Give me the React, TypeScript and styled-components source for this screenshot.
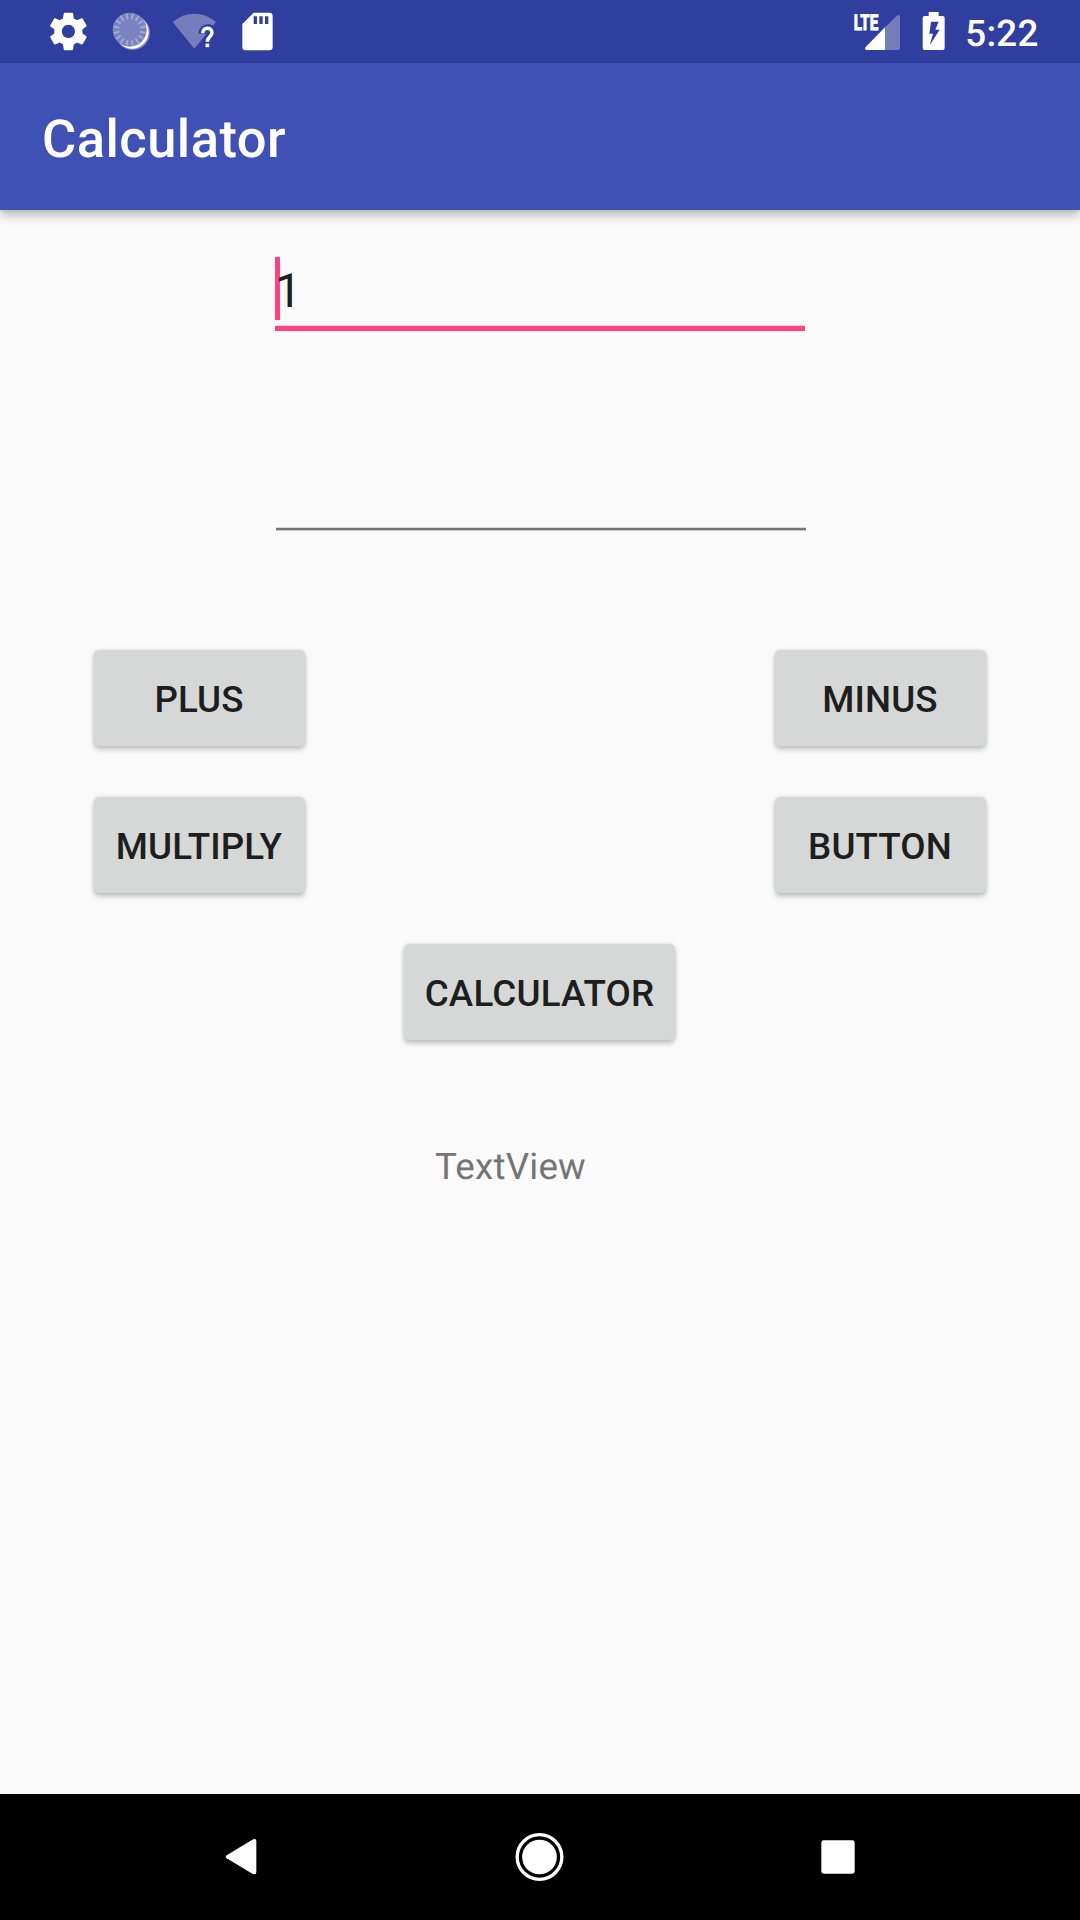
import React from "react";
import styled, { createGlobalStyle } from "styled-components";

const GlobalStyle = createGlobalStyle`
  *, *::before, *::after { box-sizing: border-box; }
  html, body { margin: 0; padding: 0; }
  body {
    width: 1080px;
    height: 1920px;
    overflow: hidden;
    background: #fafafa;
    font-family: Roboto, "Noto Sans", sans-serif;
    text-rendering: geometricPrecision;
  }
`;

const Screen = styled.div`
  display: flex;
  flex-direction: column;
  width: 1080px;
  height: 1920px;
  background: #fafafa;
`;

const StatusBar = styled.header`
  display: flex;
  justify-content: space-between;
  flex: none;
  height: 63px;
  padding: 0 41.5px 0 45px;
  background: #303f9f;
  color: #fff;
`;

const StatusGroup = styled.div`
  display: flex;
  align-items: flex-start;
`;

const StatusIcon = styled.svg<{ $after: number }>`
  display: block;
  flex: none;
  margin-right: ${(p) => p.$after}px;
`;

const Clock = styled.time`
  font-size: 36.75px;
  font-weight: 500;
  letter-spacing: 0.2px;
  line-height: 43px;
  padding-top: 12px;
`;

const Toolbar = styled.div`
  display: flex;
  align-items: center;
  flex: none;
  height: 147px;
  padding: 4px 42px 0;
  background: #3f51b5;
  box-shadow: 0 5px 10px rgba(0, 0, 0, 0.27), 0 1px 3px rgba(0, 0, 0, 0.06);
  z-index: 1;
`;

const Title = styled.h1`
  margin: 0;
  color: #fff;
  font-size: 52.5px;
  font-weight: 500;
  letter-spacing: 0.45px;
  line-height: 62px;
`;

const Content = styled.main`
  display: flex;
  flex-direction: column;
  flex: 1;
`;

const FirstField = styled.div`
  width: 530px;
  height: 75px;
  margin: 46px 0 0 275px;
  padding-top: 1px;
  border-bottom: 5px solid #ff4081;
  box-shadow: inset 0 -1px 0 rgba(255, 64, 129, 0.2);
`;

const FieldValue = styled.div`
  display: flex;
  height: 63px;
  border-left: 5px solid #ff4081;
  color: #1e1e1e;
  font-size: 47.25px;
  line-height: 63px;
  padding-top: 3px;
`;

const FieldDigit = styled.span`
  margin-left: -5px;
`;

const SecondField = styled.div`
  width: 530px;
  height: 199px;
  margin-left: 276px;
  border-bottom: 2px solid #757575;
  box-shadow: inset 0 -1px 0 rgba(0, 0, 0, 0.12), 0 1px 0 rgba(0, 0, 0, 0.2);
`;

const Pad = styled.section`
  display: grid;
  grid-template-columns: 211px 211px;
  justify-content: space-between;
  row-gap: 51px;
  margin: 120px 94px 0;
`;

const Button = styled.button<{ $width?: number }>`
  display: flex;
  align-items: center;
  justify-content: center;
  width: ${(p) => p.$width ?? 211}px;
  height: 96px;
  padding: 3px ${(p) => (p.$width ? 0 : 1)}px 0 0;
  border: 0;
  border-radius: 5px;
  background: #d6d7d7;
  color: #1e1e1e;
  font: 500 36.75px/44px Roboto, "Noto Sans", sans-serif;
  letter-spacing: ${(p) => (p.$width ? 0.2 : 0.1)}px;
  box-shadow: 0 4px 5px rgba(0, 0, 0, 0.19), 0 0 4px rgba(0, 0, 0, 0.13);
`;

const CalculateRow = styled.div`
  margin: 51px 0 0 404px;
`;

const Result = styled.p`
  margin: 105px 0 0 435px;
  color: #757575;
  font-size: 36.75px;
  letter-spacing: 0.2px;
  line-height: 43px;
`;

const NavBar = styled.nav`
  display: flex;
  align-items: center;
  justify-content: space-between;
  flex: none;
  height: 126px;
  padding: 0 224px;
  background: #000;
`;

const TICKS = Array.from({ length: 16 }, (_, i) => 11.25 + i * 22.5);

const SettingsIcon = () => (
  <StatusIcon $after={19} width="46" height="63" viewBox="0 0 46 63">
    <g transform="translate(.9 8.9) scale(1.875)">
      <path
        fill="#fff"
        d="M19.43 12.98c.04-.32.07-.64.07-.98s-.03-.66-.07-.98l2.11-1.65c.19-.15.24-.42.12-.64l-2-3.46c-.12-.22-.39-.3-.61-.22l-2.49 1c-.52-.4-1.08-.73-1.69-.98l-.38-2.65C14.46 2.18 14.25 2 14 2h-4c-.25 0-.46.18-.49.42l-.38 2.65c-.61.25-1.17.59-1.69.98l-2.49-1c-.23-.09-.49 0-.61.22l-2 3.46c-.13.22-.07.49.12.64l2.11 1.65c-.04.32-.07.65-.07.98s.03.66.07.98l-2.11 1.65c-.19.15-.24.42-.12.64l2 3.46c.12.22.39.3.61.22l2.49-1c.52.4 1.08.73 1.69.98l.38 2.65c.03.24.24.42.49.42h4c.25 0 .46-.18.49-.42l.38-2.65c.61-.25 1.17-.59 1.69-.98l2.49 1c.23.09.49 0 .61-.22l2-3.46c.12-.22.07-.49-.12-.64l-2.11-1.65zM12 15.5c-1.93 0-3.5-1.57-3.5-3.5s1.57-3.5 3.5-3.5 3.5 1.57 3.5 3.5-1.57 3.5-3.5 3.5z"
      />
    </g>
  </StatusIcon>
);

const SyncIcon = () => (
  <StatusIcon $after={20} width="42" height="63" viewBox="240 0 126 189">
    <circle cx="308" cy="98" r="52" fill="#7b82c0" />
    <circle cx="306" cy="96" r="50" fill="#fff" />
    <circle cx="299" cy="89" r="51" fill="#7b82c0" />
    {TICKS.map((a) => (
      <line
        key={a}
        x1="299"
        y1="40"
        x2="299"
        y2="57"
        stroke="#a6abd5"
        strokeWidth="5.5"
        transform={`rotate(${a} 299 89)`}
      />
    ))}
  </StatusIcon>
);

const WifiIcon = () => (
  <StatusIcon $after={25} width="45" height="63" viewBox="426 0 135 189">
    <path d="M428 66Q457 41 493 41T558 66L493 146Z" fill="#757dbd" />
    <path
      d="M518 101C518 80 547 80 547 98C547 110 532 112 532 125V141"
      fill="none"
      stroke="#303f9f"
      strokeWidth="25"
    />
    <path
      d="M518 100C518 80 546 80 546 98C546 110 532 111 532 125"
      fill="none"
      stroke="#fff"
      strokeWidth="10.5"
    />
    <rect x="526.5" y="131" width="11" height="10.500" fill="#fff" />
  </StatusIcon>
);

const SdCardIcon = () => (
  <StatusIcon $after={0} width="32" height="63" viewBox="636 0 96 189">
    <path
      fill="#fff"
      fillRule="evenodd"
      d="M671 38H718Q728 38 728 48V141Q728 151 718 151H647Q637 151 637 141V72ZM671 49V72H681V49ZM688 49V72H698V49ZM705 49V72H715V49Z"
    />
  </StatusIcon>
);

const SignalIcon = () => (
  <StatusIcon $after={21} width="48" height="63" viewBox="69 0 144 189">
    <text
      x="71"
      y="89.5"
      fill="#fff"
      stroke="#fff"
      strokeWidth="3"
      fontFamily="Roboto, sans-serif"
      fontSize="66"
      fontWeight="700"
      textLength="74"
      lengthAdjust="spacingAndGlyphs"
    >
      LTE
    </text>
    <path d="M165 82L201 47Q210 41 210 52V143Q210 150 203 150H165Z" fill="#757dbd" />
    <path d="M165 82V150H110Q102 149 107 141Z" fill="#fff" />
  </StatusIcon>
);

const BatteryIcon = () => (
  <StatusIcon $after={20} width="23" height="63" viewBox="277 0 69 189">
    <path
      fill="#fff"
      fillRule="evenodd"
      d="M297 36H327V48H339Q345 48 345 54V144Q345 150 339 150H285Q279 150 279 144V54Q279 48 285 48H297ZM304 65L299 101H310L300 136L330 89H317L327 65Z"
    />
  </StatusIcon>
);

const App = () => (
  <>
    <GlobalStyle />
    <Screen>
      <StatusBar>
        <StatusGroup>
          <SettingsIcon />
          <SyncIcon />
          <WifiIcon />
          <SdCardIcon />
        </StatusGroup>
        <StatusGroup>
          <SignalIcon />
          <BatteryIcon />
          <Clock>5:22</Clock>
        </StatusGroup>
      </StatusBar>
      <Toolbar>
        <Title>Calculator</Title>
      </Toolbar>
      <Content>
        <FirstField>
          <FieldValue>
            <FieldDigit>1</FieldDigit>
          </FieldValue>
        </FirstField>
        <SecondField />
        <Pad>
          <Button>PLUS</Button>
          <Button>MINUS</Button>
          <Button>MULTIPLY</Button>
          <Button>BUTTON</Button>
        </Pad>
        <CalculateRow>
          <Button $width={271}>CALCULATOR</Button>
        </CalculateRow>
        <Result>TextView</Result>
      </Content>
      <NavBar>
        <svg width="34" height="52" viewBox="72 154 102 156">
          <path d="M80 227L157 180Q169 174 169 185V277Q169 288 157 282L80 236Q74 231 80 227Z" fill="#fff" />
        </svg>
        <svg width="50" height="52" viewBox="942 151 150 156">
          <circle cx="1018.500" cy="229" r="67" fill="none" stroke="#fff" strokeWidth="10" />
          <circle cx="1018.500" cy="229" r="52" fill="#fff" />
        </svg>
        <svg width="36" height="52" viewBox="120 153 108 156">
          <rect x="124" y="181" width="100" height="100" rx="7" fill="#fff" />
        </svg>
      </NavBar>
    </Screen>
  </>
);

export default App;
